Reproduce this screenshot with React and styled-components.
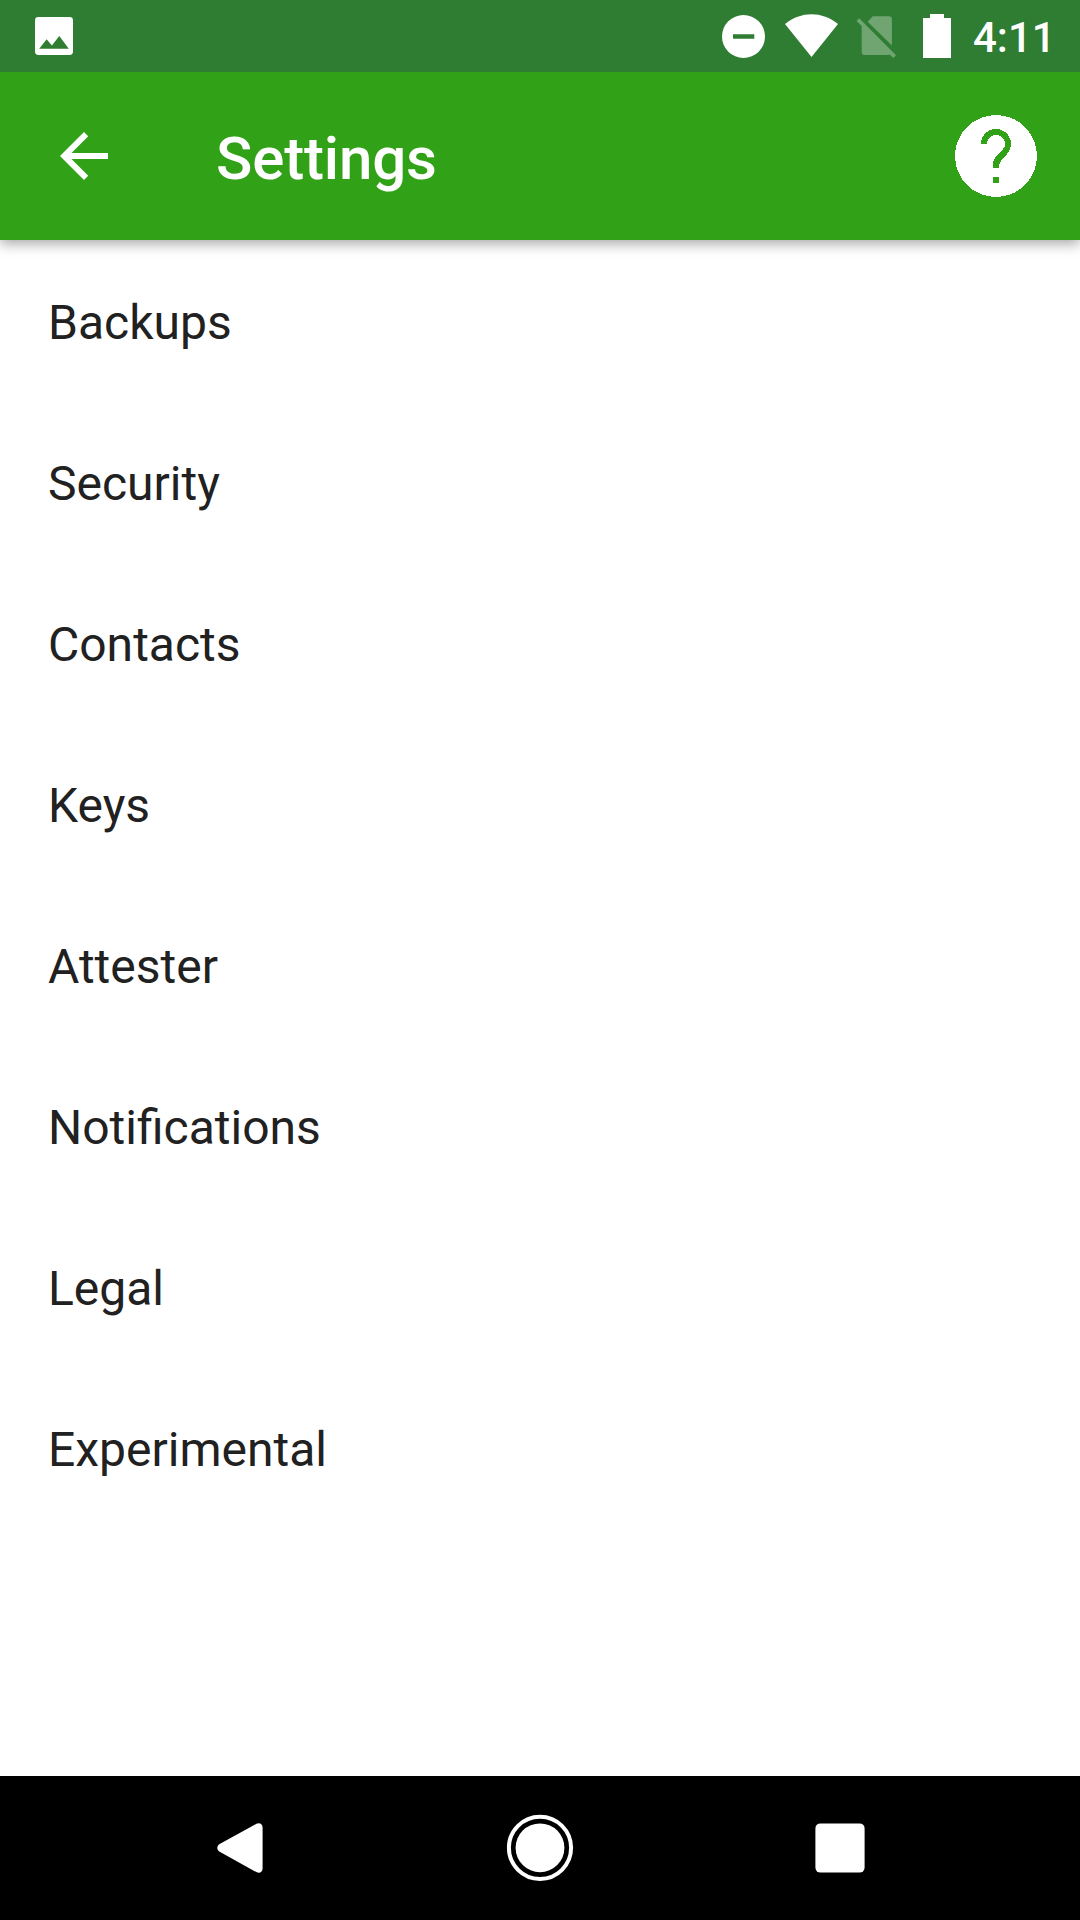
import React from "react";
import styled, { createGlobalStyle } from "styled-components";

const GlobalStyle = createGlobalStyle`
  * { box-sizing: border-box; }
  body { margin: 0; background: #fff; }
`;

const Screen = styled.div`
  width: 1080px;
  height: 1920px;
  display: flex;
  flex-direction: column;
  background: #fff;
  font-family: Roboto, "Noto Sans", sans-serif;
  overflow: hidden;
`;

const StatusBar = styled.header`
  position: relative;
  z-index: 1;
  flex: none;
  height: 72px;
  padding: 0 28px 0 35px;
  display: flex;
  align-items: center;
  justify-content: space-between;
  background: #2f7d32;
  color: #fff;
`;

const StatusIcons = styled.div`
  display: flex;
  align-items: center;
`;

const Icon = styled.svg`
  display: block;
  flex: none;
  width: ${(p) => p.$w}px;
  height: ${(p) => p.$h}px;
  margin-left: ${(p) => p.$gap || 0}px;
  fill: currentColor;
`;

const Clock = styled.time`
  margin-left: 22px;
  padding-top: 3px;
  width: 79px;
  font-size: 42px;
  line-height: 49px;
  font-weight: 500;
  white-space: nowrap;
`;

const AppBar = styled.div`
  flex: none;
  height: 168px;
  padding: 0 43px 0 60px;
  display: flex;
  align-items: center;
  background: #31a217;
  color: #fff;
  box-shadow: 0 4px 12px rgba(0, 0, 0, 0.34);
`;

const BarButton = styled.button`
  display: block;
  padding: 0;
  border: 0;
  background: none;
  color: inherit;
`;

const Title = styled.h1`
  flex: 1;
  margin: 0 0 0 108px;
  padding-top: 6px;
  font-size: 60px;
  line-height: 70px;
  font-weight: 500;
  letter-spacing: -0.15px;
`;

const SettingsList = styled.ul`
  flex: 1;
  margin: 0;
  padding: 2px 0 0;
  list-style: none;
`;

const SettingsItem = styled.li`
  height: 161px;
  padding: 0 48px;
  display: flex;
  align-items: center;
  font-size: 48px;
  line-height: 56px;
  color: #212121;
`;

const NavBar = styled.nav`
  flex: none;
  height: 144px;
  padding: 0 90px;
  display: grid;
  grid-template-columns: repeat(3, 1fr);
  align-items: center;
  justify-items: center;
  background: #000;
  color: #fff;
`;

const sections = [
  "Backups",
  "Security",
  "Contacts",
  "Keys",
  "Attester",
  "Notifications",
  "Legal",
  "Experimental",
];

export default function App() {
  return (
    <>
      <GlobalStyle />
      <Screen>
        <StatusBar>
          <Icon $w={38} $h={38} viewBox="3 3 18 18">
            <path
              fillRule="evenodd"
              d="M4.600 3h14.800A1.600 1.600 0 0 1 21 4.600v14.800a1.600 1.600 0 0 1-1.600 1.600H4.600A1.600 1.600 0 0 1 3 19.400V4.600A1.600 1.600 0 0 1 4.600 3zM8.500 13.500L5 18h14l-4.500-6-3.500 4.500z"
            />
          </Icon>
          <StatusIcons>
            <Icon $w={43} $h={44} viewBox="0 0 43 44">
              <path fillRule="evenodd" d="M21.500 1a21.500 21.500 0 1 0 0 43 21.500 21.500 0 0 0 0-43zM11 20.300h21.300v4.400H11z" />
            </Icon>
            <Icon $w={53} $h={44} $gap={20} viewBox="0 0 53 44">
              <path d="M26.500 43L0 9.900C8 3.500 17 .2 26.500.2S45 3.500 53 9.900z" />
            </Icon>
            <Icon $w={41} $h={44} $gap={18} viewBox="0 0 41 44" opacity="0.31">
              <path d="M11.700 7.800L16.700 2.300h16.200a3 3 0 0 1 3 3V31.400zM3.200 4.200L40 41.300l-2.700 2.700-3.600-3.500a3 3 0 0 1-1.400.4H8.700a3 3 0 0 1-3-3V12L.5 6.900z" />
            </Icon>
            <Icon $w={28} $h={44} $gap={26} viewBox="0 0 28 44">
              <path d="M7 0h14v4h7v40H0V4h7z" />
            </Icon>
            <Clock>4:11</Clock>
          </StatusIcons>
        </StatusBar>

        <AppBar>
          <BarButton aria-label="Back">
            <Icon $w={48} $h={48} viewBox="4 4 16 16">
              <path d="M20 11H7.830l5.590-5.590L12 4l-8 8 8 8 1.410-1.410L7.830 13H20v-2z" />
            </Icon>
          </BarButton>
          <Title>Settings</Title>
          <BarButton aria-label="Help">
            <Icon $w={82} $h={82} viewBox="0 0 82 82" shapeRendering="crispEdges">
              <path
                fillRule="evenodd"
                d="M41 0a41 41 0 1 0 0 82 41 41 0 0 0 0-82zM38 62h6v6h-6zM38 53h6c0-3.500.3-5 2-7.200L52.500 38.500c2.300-2.700 3.500-5.500 3.500-9.500a15 15 0 0 0-30 0h6a9 9 0 0 1 18 0c0 2.400-.6 3.800-2.300 5.600L41.500 41c-2.600 2.800-3.500 5-3.500 8z"
              />
            </Icon>
          </BarButton>
        </AppBar>

        <SettingsList>
          {sections.map((name) => (
            <SettingsItem key={name}>{name}</SettingsItem>
          ))}
        </SettingsList>

        <NavBar>
          <Icon $w={46} $h={50} viewBox="0 0 46 50">
            <path d="M39.400.8C42.500-.8 45.600.8 45.600 4.500v41c0 3.700-3.100 5.100-6.200 3.600L2.700 28.700c-3.200-1.900-3.200-5.700 0-7.600z" />
          </Icon>
          <Icon $w={68} $h={68} viewBox="0 0 68 68">
            <circle cx="34" cy="33.800" r="31.100" fill="none" stroke="currentColor" strokeWidth="4" />
            <circle cx="34" cy="33.800" r="24.400" />
          </Icon>
          <Icon $w={50} $h={50} viewBox="0 0 50 50">
            <rect x="0.400" y="0.400" width="49.200" height="49.200" rx="5" />
          </Icon>
        </NavBar>
      </Screen>
    </>
  );
}
